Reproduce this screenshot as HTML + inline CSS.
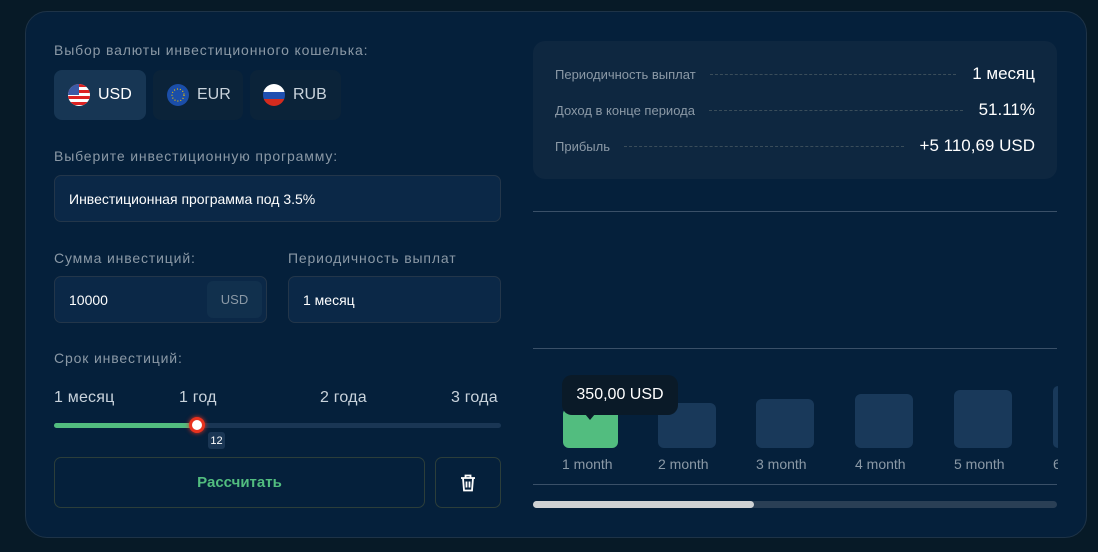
<!DOCTYPE html>
<html><head><meta charset="utf-8"><style>
*{box-sizing:border-box;margin:0;padding:0}
body{width:1098px;height:552px;background:#071a27;font-family:"Liberation Sans","Noto Sans CJK SC",sans-serif;position:relative;overflow:hidden;color:#fff}
.card{position:absolute;left:25px;top:11px;width:1062px;height:527px;background:#05203b;border:1px solid #1e3347;border-radius:22px}
.a{position:absolute}
.lbl{color:#8b99a6;font-size:14px;letter-spacing:.85px}
.cur{position:absolute;top:70px;height:50px;border-radius:8px;background:#0b2339;display:flex;align-items:center;font-size:16px;color:#c9d3dc}
.cur svg{margin-right:8px}
.inp{position:absolute;background:#0b2847;border:1px solid #23364a;border-radius:7px;font-size:14px;display:flex;align-items:center;padding-left:14px}
.tick{position:absolute;top:389px;font-size:16px;color:#c9d3dc;letter-spacing:.2px}
.row{position:absolute;left:555px;width:480px;display:flex;align-items:center}
.row .k{color:#8b99a6;font-size:13px}
.row .d{flex:1;border-top:1px dashed #3a4d5a;margin:0 16px 0 14px}
.row .v{font-size:17px;color:#fff}
.bar{position:absolute;background:#19395a;border-radius:6px}
.mo{position:absolute;top:456px;font-size:14px;color:#8b99a6}
</style></head><body>
<div class="card"></div>
<div class="a lbl" style="left:54px;top:42px">Выбор валюты инвестиционного кошелька:</div>
<div class="cur" style="left:54px;width:92px;background:#173654;padding-left:14px;color:#fff">
<svg width="22" height="22" viewBox="0 0 22 22"><defs><clipPath id="c1"><circle cx="11" cy="11" r="11"/></clipPath></defs><g clip-path="url(#c1)"><rect width="22" height="22" fill="#fff"/><rect y="0" width="22" height="3" fill="#d22"/><rect y="6" width="22" height="3" fill="#d22"/><rect y="12" width="22" height="3" fill="#d22"/><rect y="18" width="22" height="3" fill="#d22"/><rect width="11" height="11" fill="#3c5aa6"/></g></svg>USD</div>
<div class="cur" style="left:153px;width:90px;padding-left:14px">
<svg width="22" height="22" viewBox="0 0 22 22"><circle cx="11" cy="11" r="11" fill="#1b4ea8"/><circle cx="11" cy="11" r="6" fill="none" stroke="#f3c300" stroke-width="1.2" stroke-dasharray="1 2"/></svg>EUR</div>
<div class="cur" style="left:250px;width:91px;padding-left:13px">
<svg width="22" height="22" viewBox="0 0 22 22"><defs><clipPath id="c2"><circle cx="11" cy="11" r="11"/></clipPath></defs><g clip-path="url(#c2)"><rect width="22" height="8" fill="#fff"/><rect y="8" width="22" height="7" fill="#1f4fb0"/><rect y="15" width="22" height="7" fill="#d52b1e"/></g></svg>RUB</div>
<div class="a lbl" style="left:54px;top:148px">Выберите инвестиционную программу:</div>
<div class="inp" style="left:54px;top:175px;width:447px;height:47px">Инвестиционная программа под 3.5%</div>
<div class="a lbl" style="left:54px;top:250px">Сумма инвестиций:</div>
<div class="a lbl" style="left:288px;top:250px">Периодичность выплат</div>
<div class="inp" style="left:54px;top:276px;width:213px;height:47px">10000
<div class="a" style="right:4px;top:4px;width:55px;height:37px;background:#11304d;border-radius:6px;color:#8b99a6;font-size:13px;display:flex;align-items:center;justify-content:center">USD</div></div>
<div class="inp" style="left:288px;top:276px;width:213px;height:47px">1 месяц</div>
<div class="a lbl" style="left:54px;top:350px">Срок инвестиций:</div>
<div class="tick" style="left:54px">1 месяц</div>
<div class="tick" style="left:179px">1 год</div>
<div class="tick" style="left:320px">2 года</div>
<div class="tick" style="left:451px">3 года</div>
<div class="a" style="left:54px;top:423px;width:447px;height:5px;border-radius:3px;background:#1a3654"></div>
<div class="a" style="left:54px;top:423px;width:144px;height:5px;border-radius:3px;background:#52bd7f"></div>
<div class="a" style="left:189px;top:417px;width:16px;height:16px;border-radius:50%;background:#fff;border:3px solid #e8321e;box-shadow:0 0 5px #e8321e"></div>
<div class="a" style="left:208px;top:432px;width:17px;height:17px;background:#1a3654;border-radius:3px;font-size:11px;display:flex;align-items:center;justify-content:center">12</div>
<div class="a" style="left:54px;top:457px;width:371px;height:51px;border:1px solid #2c3e3a;border-radius:7px;color:#52bd7f;font-weight:bold;font-size:15px;display:flex;align-items:center;justify-content:center">Рассчитать</div>
<div class="a" style="left:435px;top:457px;width:66px;height:51px;border:1px solid #2c3e3a;border-radius:7px;display:flex;align-items:center;justify-content:center">
<svg width="16" height="18" viewBox="0 0 16 18" fill="none" stroke="#fff" stroke-width="1.8"><path d="M1 4h14M5.5 4V1.5h5V4M3 4l1 12.5h8L13 4M6.5 7.5v6M9.5 7.5v6"/></svg></div>
<div class="a" style="left:533px;top:41px;width:524px;height:138px;background:#0e2740;border-radius:12px"></div>
<div class="row" style="top:64px"><span class="k">Периодичность выплат</span><span class="d"></span><span class="v">1 месяц</span></div>
<div class="row" style="top:100px"><span class="k">Доход в конце периода</span><span class="d"></span><span class="v">51.11%</span></div>
<div class="row" style="top:136px"><span class="k">Прибыль</span><span class="d"></span><span class="v">+5 110,69 USD</span></div>
<div class="a" style="left:533px;top:211px;width:524px;height:1px;background:#3a5068"></div>
<div class="a" style="left:533px;top:348px;width:524px;height:1px;background:#3a5068"></div>
<div class="bar" style="left:563px;top:408px;width:55px;height:40px;background:#52bd7f"></div>
<div class="bar" style="left:658px;top:403px;width:58px;height:45px"></div>
<div class="bar" style="left:756px;top:399px;width:58px;height:49px"></div>
<div class="bar" style="left:855px;top:394px;width:58px;height:54px"></div>
<div class="bar" style="left:954px;top:390px;width:58px;height:58px"></div>
<div class="bar" style="left:1053px;top:386px;width:5px;height:62px;border-radius:6px 0 0 6px"></div>
<div class="a" style="left:562px;top:375px;width:116px;height:40px;background:#0a1a28;border-radius:10px;font-size:16px;display:flex;align-items:center;justify-content:center">350,00 USD</div>
<div class="a" style="left:585px;top:414px;width:0;height:0;border-left:5px solid transparent;border-right:5px solid transparent;border-top:6px solid #0a1a28"></div>
<div class="mo" style="left:562px">1 month</div>
<div class="mo" style="left:658px">2 month</div>
<div class="mo" style="left:756px">3 month</div>
<div class="mo" style="left:855px">4 month</div>
<div class="mo" style="left:954px">5 month</div>
<div class="mo" style="left:1053px;width:5px;overflow:hidden">6</div>
<div class="a" style="left:533px;top:484px;width:524px;height:1px;background:#3a5068"></div>
<div class="a" style="left:533px;top:501px;width:524px;height:7px;border-radius:4px;background:#2a3f55"></div>
<div class="a" style="left:533px;top:501px;width:221px;height:7px;border-radius:4px;background:#cfd2d4"></div>
</body></html>
